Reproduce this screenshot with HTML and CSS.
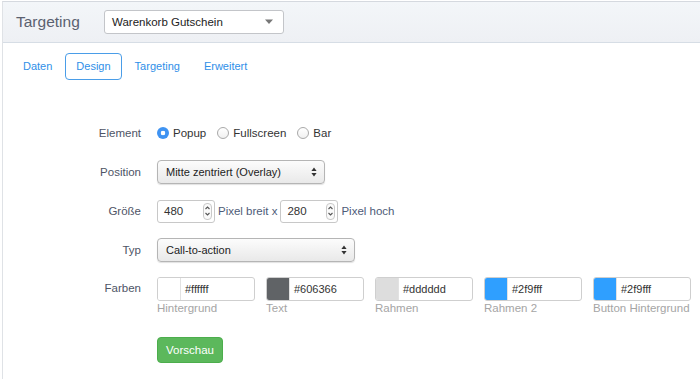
FILE: index.html
```html
<!DOCTYPE html>
<html lang="de">
<head>
    <meta charset="UTF-8">
    <title>Targeting</title>
    <link rel="stylesheet" href="styles.css">
</head>
<body>

<div class="panel">
    <div class="panel-head">
        <h1 class="title">Targeting</h1>
        <div class="head-select">
            <span>Warenkorb Gutschein</span>
            <svg class="caret" width="10" height="6" viewBox="0 0 10 6"><path d="M1 0.5h8L5 5z" fill="#777"/></svg>
        </div>
    </div>

    <ul class="tabs">
        <li><a href="#">Daten</a></li>
        <li class="active"><a href="#">Design</a></li>
        <li><a href="#">Targeting</a></li>
        <li><a href="#">Erweitert</a></li>
    </ul>

    <form class="form">
        <div class="row">
            <label class="lbl">Element</label>
            <div class="ctrl radios">
                <label class="radio"><span class="dot checked"></span>Popup</label>
                <label class="radio"><span class="dot"></span>Fullscreen</label>
                <label class="radio"><span class="dot"></span>Bar</label>
            </div>
        </div>

        <div class="row">
            <label class="lbl">Position</label>
            <div class="ctrl">
                <div class="select pos-select">
                    <span>Mitte zentriert (Overlay)</span>
                    <svg class="updown" width="6" height="10" viewBox="0 0 6 10"><path d="M3 0.5L5.6 4H0.4z M3 9.5L5.6 6H0.4z" fill="#333"/></svg>
                </div>
            </div>
        </div>

        <div class="row">
            <label class="lbl">Größe</label>
            <div class="ctrl size">
                <div class="num">480<span class="spin"><svg width="7" height="14" viewBox="0 0 7 14"><path d="M1.5 5L3.5 3L5.5 5 M1.5 9L3.5 11L5.5 9" fill="none" stroke="#555" stroke-width="1.1"/></svg></span></div>
                <span class="unit">Pixel breit x</span>
                <div class="num">280<span class="spin"><svg width="7" height="14" viewBox="0 0 7 14"><path d="M1.5 5L3.5 3L5.5 5 M1.5 9L3.5 11L5.5 9" fill="none" stroke="#555" stroke-width="1.1"/></svg></span></div>
                <span class="unit">Pixel hoch</span>
            </div>
        </div>

        <div class="row">
            <label class="lbl">Typ</label>
            <div class="ctrl">
                <div class="select typ-select">
                    <span>Call-to-action</span>
                    <svg class="updown" width="6" height="10" viewBox="0 0 6 10"><path d="M3 0.5L5.6 4H0.4z M3 9.5L5.6 6H0.4z" fill="#333"/></svg>
                </div>
            </div>
        </div>

        <div class="row colors-row">
            <label class="lbl">Farben</label>
            <div class="ctrl colors">
                <div class="color">
                    <div class="color-box"><span class="swatch" style="background:#ffffff"></span><span class="hex">#ffffff</span></div>
                    <div class="cap">Hintergrund</div>
                </div>
                <div class="color">
                    <div class="color-box"><span class="swatch" style="background:#606366"></span><span class="hex">#606366</span></div>
                    <div class="cap">Text</div>
                </div>
                <div class="color">
                    <div class="color-box"><span class="swatch" style="background:#dddddd"></span><span class="hex">#dddddd</span></div>
                    <div class="cap">Rahmen</div>
                </div>
                <div class="color">
                    <div class="color-box"><span class="swatch" style="background:#2f9fff"></span><span class="hex">#2f9fff</span></div>
                    <div class="cap">Rahmen 2</div>
                </div>
                <div class="color">
                    <div class="color-box"><span class="swatch" style="background:#2f9fff"></span><span class="hex">#2f9fff</span></div>
                    <div class="cap">Button Hintergrund</div>
                </div>
            </div>
        </div>

        <div class="row">
            <span class="lbl"></span>
            <div class="ctrl">
                <button type="button" class="btn-preview">Vorschau</button>
            </div>
        </div>
    </form>
</div>

</body>
</html>
```

FILE: styles.css
```css
body {
    margin: 0;
    font-family: 'Liberation Sans', Arial, sans-serif;
    font-size: 11px;
    background-color: #ffffff;
    overflow: hidden;
}

.panel {
    margin: 1px 0 0 2px;
    width: 698px;
    height: 378px;
    overflow: hidden;
    border-top: 1px solid #d5d9df;
    border-left: 1px solid #dfe2e6;
    background-color: #fff;
}

.panel-head {
    display: flex;
    align-items: center;
    height: 40px;
    padding-left: 13px;
    background: linear-gradient(#f3f6f9, #eef0f4);
    border-bottom: 1px solid #d6dde5;
}

.title {
    margin: 0;
    width: 88px;
    font-size: 15.5px;
    font-weight: normal;
    color: #5b6170;
}

.head-select {
    display: flex;
    align-items: center;
    justify-content: space-between;
    box-sizing: border-box;
    width: 180px;
    height: 24px;
    padding: 0 9px 0 7px;
    border: 1px solid #c3c5c9;
    border-radius: 3px;
    background: #fff;
    color: #222;
    font-size: 11.5px;
}

.tabs {
    display: flex;
    gap: 2px;
    list-style: none;
    margin: 10px 0 0 0;
    padding: 0 0 0 9px;
}

.tabs li a {
    display: block;
    box-sizing: border-box;
    height: 27px;
    line-height: 25px;
    padding: 0 10px;
    border: 1px solid transparent;
    border-radius: 4px;
    color: #2f8fe8;
    text-decoration: none;
    font-size: 11px;
}

.tabs li.active a {
    border-color: #4a9de8;
}

.form {
    margin-top: 41px;
}

.row {
    display: flex;
    align-items: center;
    margin-bottom: 15px;
    min-height: 24px;
}

.lbl {
    flex: none;
    width: 138px;
    margin-right: 16px;
    text-align: right;
    color: #4e5466;
    font-size: 11.5px;
}

.ctrl {
    display: flex;
    align-items: center;
}

.radios {
    gap: 11px;
}

.radio {
    display: flex;
    align-items: center;
    color: #333;
    font-size: 11.5px;
}

.dot {
    box-sizing: border-box;
    width: 12px;
    height: 12px;
    margin-right: 4px;
    border-radius: 50%;
    border: 1px solid #a9a9a9;
    background: linear-gradient(#fff, #f0f0f0);
}

.dot.checked {
    border: none;
    background: radial-gradient(circle, #fff 0 2px, #3f93f2 2.6px);
}

.select {
    position: relative;
    display: flex;
    align-items: center;
    box-sizing: border-box;
    height: 24px;
    padding-left: 8px;
    border: 1px solid #b5b5b5;
    border-radius: 4px;
    background: linear-gradient(#fcfcfc, #e9e9e9);
    box-shadow: 0 1px 1px rgba(0, 0, 0, 0.12);
    color: #222;
}

.pos-select {
    width: 168px;
}

.typ-select {
    width: 198px;
}

.updown {
    position: absolute;
    right: 7px;
    top: 6px;
}

.size {
    gap: 3px;
}

.num {
    position: relative;
    box-sizing: border-box;
    width: 58px;
    height: 23px;
    line-height: 21px;
    padding-left: 6px;
    border: 1px solid #c8c8c8;
    border-radius: 3px;
    color: #333;
    font-size: 11.5px;
}

.spin {
    position: absolute;
    right: 2px;
    top: 2px;
    display: flex;
    box-sizing: border-box;
    width: 9px;
    height: 17px;
    align-items: center;
    justify-content: center;
    border: 1px solid #c9c9c9;
    border-radius: 4px;
    background: #fafafa;
}

.unit {
    color: #4e5b78;
    font-size: 11.5px;
}

.colors-row {
    align-items: flex-start;
}

.colors-row .lbl {
    line-height: 23px;
}

.colors {
    align-items: flex-start;
    gap: 11px;
}

.color {
    flex: none;
    width: 98px;
}

.color-box {
    display: flex;
    box-sizing: border-box;
    height: 24px;
    border: 1px solid #cfcfcf;
    border-radius: 3px;
    overflow: hidden;
}

.swatch {
    width: 22px;
    border-right: 1px solid #e2e2e2;
}

.hex {
    line-height: 22px;
    padding-left: 4px;
    color: #333;
}

.cap {
    margin-top: 1px;
    white-space: nowrap;
    color: #a5a5a5;
    font-size: 11.5px;
}

.btn-preview {
    margin-top: 8px;
    height: 26px;
    padding: 0 8px;
    border: 1px solid #4cae4c;
    border-radius: 4px;
    background-color: #5cb85c;
    color: #fff;
    font-family: 'Liberation Sans', Arial, sans-serif;
    font-size: 11.5px;
}
```
